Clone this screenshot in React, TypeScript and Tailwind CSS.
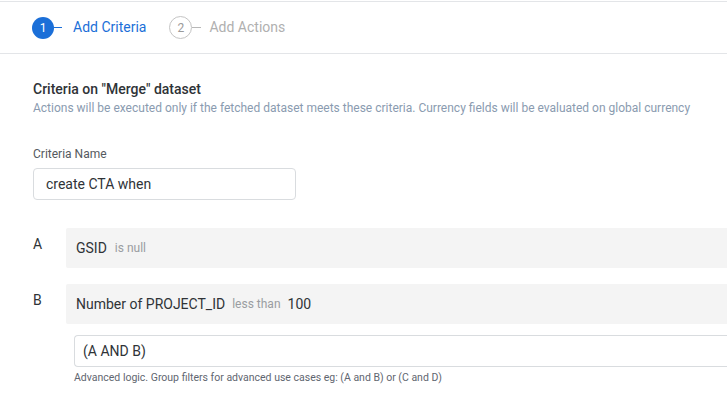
import React from "react";

export default function App() {
  return (
    <div className="w-[727px] h-[419px] overflow-hidden bg-white" style={{ fontFamily: "Roboto, 'Liberation Sans', sans-serif" }}>
      <div className="mt-px h-[53px] border-y border-[#e3e5e8] flex items-center pl-[32px]">
        <div className="flex items-center">
          <div className="w-[22px] h-[22px] rounded-full bg-[#1b6fd8] text-white text-[12px] flex items-center justify-center">1</div>
          <div className="w-[8px] h-[1.5px] bg-[#1b6fd8] mr-[11px]"></div>
          <span className="text-[14px] text-[#1b6fd8]">Add Criteria</span>
        </div>
        <div className="flex items-center ml-[23px]">
          <div className="w-[23px] h-[23px] rounded-full border border-[#c4c4c4] text-[#9a9a9a] text-[12px] flex items-center justify-center">2</div>
          <div className="w-[9px] h-[1.5px] bg-[#b8b8b8] mr-[8px]"></div>
          <span className="text-[14px] text-[#b0b0b0]">Add Actions</span>
        </div>
      </div>
      <div className="pl-[33px]">
        <div className="mt-[25px] text-[14px] font-medium text-[#2f3337] leading-[20px]">Criteria on "Merge" dataset</div>
        <div className="mt-[1px] text-[12px] text-[#8a9bb0] leading-[16px]">Actions will be executed only if the fetched dataset meets these criteria. Currency fields will be evaluated on global currency</div>
        <div className="mt-[30px] text-[12px] text-[#555a60] leading-[16px]">Criteria Name</div>
        <div className="mt-[6px] w-[263px] h-[32px] border border-[#d9dcdf] rounded-[4px] flex items-center pl-[12px] text-[14px] text-[#2f3337]">create CTA when</div>
        <div className="mt-[28px] flex">
          <div className="w-[33px] text-[14px] text-[#2f3337] pt-[6px]">A</div>
          <div className="flex-1 h-[40px] bg-[#f4f4f4] rounded-l-[2px] flex items-center pl-[10px] -mr-[10px]">
            <span className="text-[14px] text-[#2f3337]">GSID</span>
            <span className="ml-[8px] text-[12px] text-[#9a9da1]">is null</span>
          </div>
        </div>
        <div className="mt-[16px] flex">
          <div className="w-[33px] text-[14px] text-[#2f3337] pt-[6px]">B</div>
          <div className="flex-1 h-[40px] bg-[#f4f4f4] rounded-l-[2px] flex items-center pl-[10px] -mr-[10px]">
            <span className="text-[14px] text-[#2f3337]">Number of PROJECT_ID</span>
            <span className="ml-[7px] text-[12px] text-[#9a9da1]">less than</span>
            <span className="ml-[7px] text-[14px] text-[#2f3337]">100</span>
          </div>
        </div>
        <div className="ml-[41px] mt-[11px]">
          <div className="h-[32px] border border-[#d9dcdf] rounded-l-[4px] border-r-0 -mr-[10px] flex items-center pl-[8px] text-[14px] text-[#2f3337]">(A AND B)</div>
          <div className="mt-[4px] text-[10.5px] text-[#5f6670] leading-[14px]">Advanced logic. Group filters for advanced use cases eg: (A and B) or (C and D)</div>
        </div>
      </div>
    </div>
  );
}
